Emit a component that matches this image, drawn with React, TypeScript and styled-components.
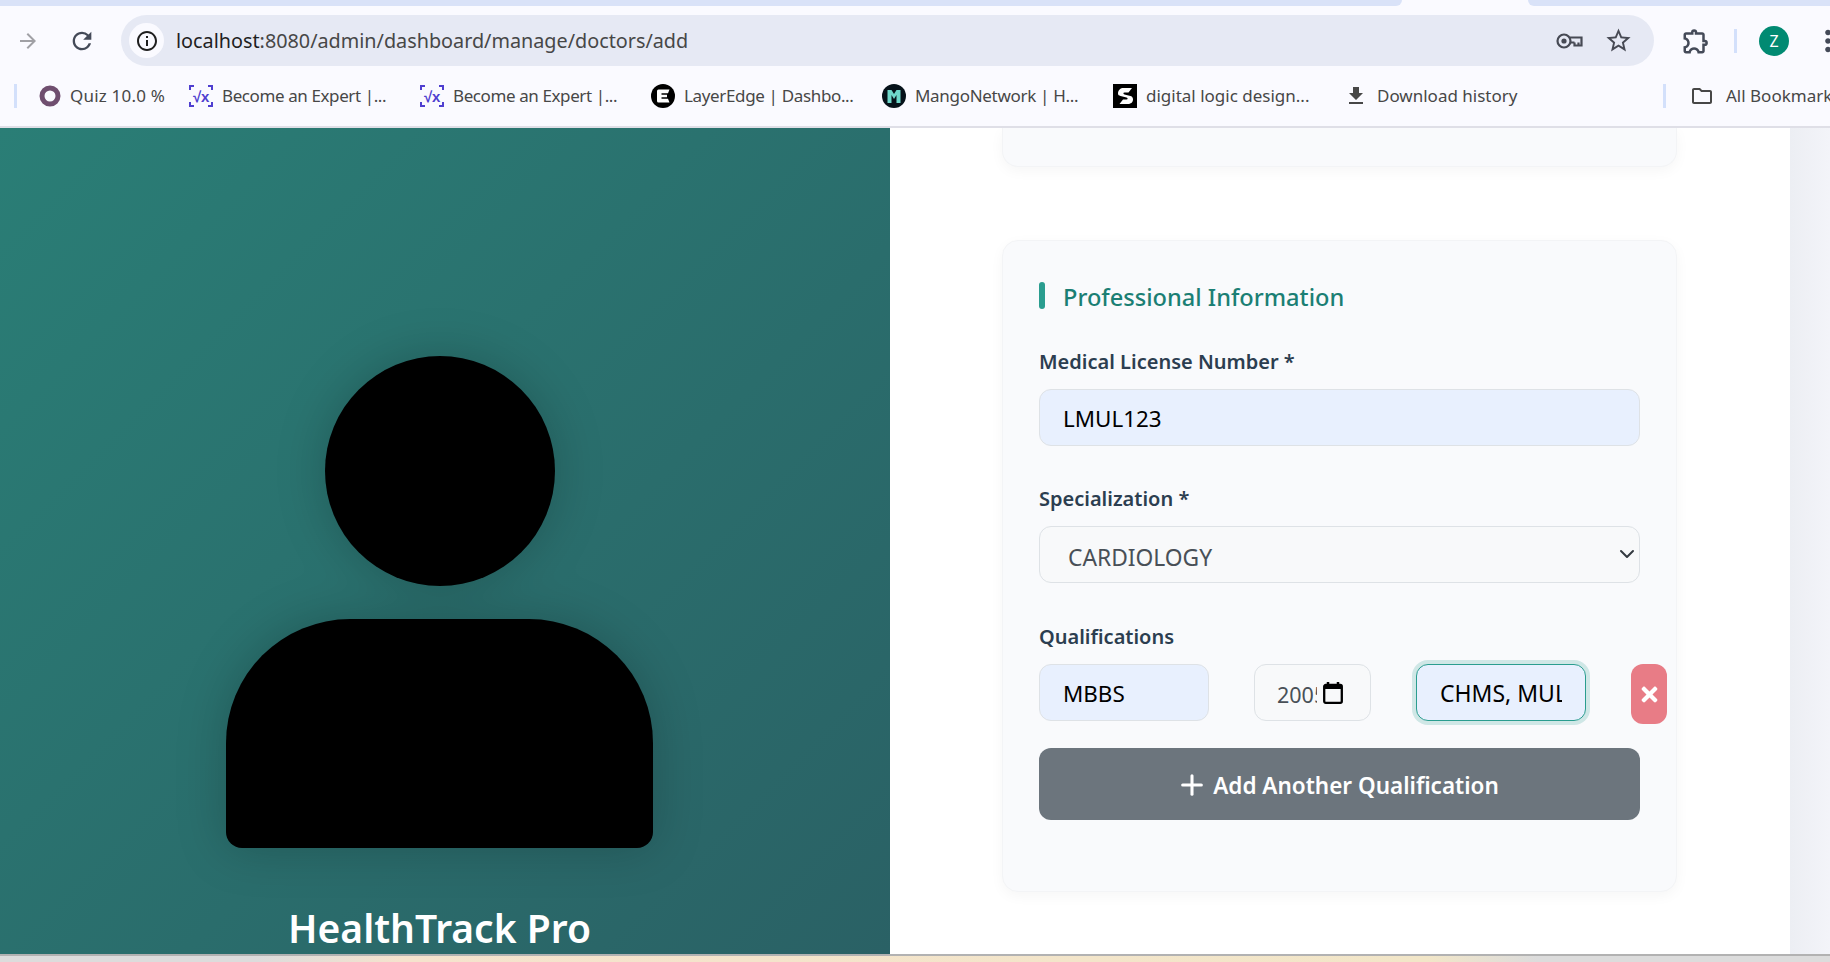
import React from "react"
import styled, { createGlobalStyle } from "styled-components"
import { MdArrowForward, MdRefresh, MdInfoOutline, MdStarBorder, MdOutlineExtension, MdFileDownload, MdOutlineFolder, MdMoreVert } from "react-icons/md"
import { FaTimes } from "react-icons/fa"
import { Plus, ChevronDown } from "lucide-react"

const GlobalStyle = createGlobalStyle`
  html, body {
    margin: 0;
    padding: 0;
    height: 100%;
    overflow: hidden;
    font-family: "Noto Sans", "Open Sans", sans-serif;
  }
  * { box-sizing: border-box; }
`

const Page = styled.div`
  width: 1830px;
  height: 962px;
  display: flex;
  flex-direction: column;
  overflow: hidden;
  background: #fafaff;
`

/* browser chrome */
const TabStrip = styled.div`
  height: 6px;
  display: flex;
  justify-content: space-between;
  flex-shrink: 0;
`

const TabStripPiece = styled.div<{ $w: number; $side: "left" | "right" }>`
  width: ${p => p.$w}px;
  height: 6px;
  background: #d9e2f8;
  border-bottom-${p => p.$side}-radius: 6px;
`

const Toolbar = styled.div`
  height: 60px;
  padding-top: 9px;
  display: flex;
  align-items: flex-start;
  flex-shrink: 0;
`

const NavButton = styled.div<{ $w: number; $color: string }>`
  width: ${p => p.$w}px;
  height: 51px;
  flex-shrink: 0;
  display: flex;
  align-items: center;
  justify-content: center;
  color: ${p => p.$color};
`

const AddressBar = styled.div`
  width: 1533px;
  height: 51px;
  margin-left: 13px;
  border-radius: 26px;
  background: #e6e9f4;
  display: flex;
  align-items: center;
  padding-left: 8px;
  padding-right: 21px;
  flex-shrink: 0;
`

const SiteInfo = styled.div`
  width: 35px;
  height: 35px;
  border-radius: 50%;
  background: #fafaff;
  display: flex;
  align-items: center;
  justify-content: center;
  color: #1f1f1f;
  flex-shrink: 0;
`

const Url = styled.div`
  margin-left: 12px;
  font-size: 19.8px;
  color: #474747;
  flex: 1;
  white-space: nowrap;
`

const UrlHost = styled.span`
  color: #1f1f1f;
`

const BarIcons = styled.div`
  display: flex;
  align-items: center;
  gap: 21px;
  color: #474a54;
`

const ToolbarRight = styled.div`
  display: flex;
  align-items: center;
  flex-shrink: 0;
  height: 51px;
  margin-left: 27px;
  color: #444a58;
  svg {
    flex-shrink: 0;
  }
`

const ExtensionSlot = styled.div`
  width: 53px;
  flex-shrink: 0;
  display: flex;
  align-items: center;
`

const VDivider = styled.div`
  width: 3px;
  height: 24px;
  background: #d3e0fb;
  flex-shrink: 0;
`

const Avatar = styled.div`
  width: 30px;
  height: 30px;
  border-radius: 50%;
  background: #018a72;
  color: #fff;
  font-size: 16px;
  flex-shrink: 0;
  display: flex;
  align-items: center;
  justify-content: center;
  margin-left: 22px;
`

const Kebab = styled.div`
  margin-left: 24px;
  width: 30px;
  flex-shrink: 0;
  display: flex;
  justify-content: center;
  color: #444a58;
`

const BookmarkBar = styled.div`
  height: 62px;
  padding: 18px 0 0 14px;
  display: flex;
  align-items: flex-start;
  border-bottom: 2px solid #dfdfe7;
  flex-shrink: 0;
  overflow: hidden;
`

const BookmarkStart = styled.div`
  width: 21px;
  flex-shrink: 0;
`

const BookmarkEnd = styled.div`
  width: 24px;
  flex-shrink: 0;
`

const Bookmark = styled.div<{ $w: number; $gap?: number; $spacing?: number }>`
  width: ${p => p.$w}px;
  height: 24px;
  display: flex;
  align-items: center;
  gap: ${p => p.$gap ?? 9}px;
  flex-shrink: 0;
  font-size: 17px;
  letter-spacing: ${p => p.$spacing ?? 0}px;
  color: #474747;
  white-space: nowrap;
`

const BookmarkIcon = styled.div`
  width: 24px;
  height: 24px;
  display: flex;
  align-items: center;
  justify-content: center;
  flex-shrink: 0;
  color: #474747;
`

const BookmarkLabel = styled.span`
  margin-top: -2px;
`

const Content = styled.div`
  height: 826px;
  display: flex;
  flex-shrink: 0;
  background: #fff;
`

/* left brand panel */
const BrandPanel = styled.div`
  width: 890px;
  flex-shrink: 0;
  padding: 228px 11px 0 0;
  display: flex;
  flex-direction: column;
  align-items: center;
  background: linear-gradient(135deg, #2a7e76 0%, #2a6165 100%);
  overflow: hidden;
`

const PersonIcon = styled.svg`
  display: block;
  flex-shrink: 0;
  filter: drop-shadow(0 0 24px rgba(0, 0, 0, 0.2));
`

const BrandTitle = styled.h1`
  margin: 52px 0 0;
  flex-shrink: 0;
  font-size: 39px;
  line-height: 56px;
  font-weight: 600;
  color: #fff;
  white-space: nowrap;
`

/* form side */
const FormPane = styled.div`
  flex: 1;
  padding: 0 113px 0 112px;
  overflow: hidden;
`

const Card = styled.section`
  background: #f9fafc;
  border-radius: 16px;
  border: 1px solid #f3f4f6;
  box-shadow: 0 4px 14px rgba(0, 0, 0, 0.04);
`

const ClippedCard = styled(Card)`
  height: 39px;
  border-top: none;
  border-top-left-radius: 0;
  border-top-right-radius: 0;
  margin-bottom: 73px;
`

const ProfessionalCard = styled(Card)`
  height: 652px;
  padding: 41px 36px 0;
`

const SectionTitle = styled.h2`
  margin: 0 0 40px;
  height: 27px;
  display: flex;
  align-items: center;
  gap: 18px;
  font-size: 23.6px;
  font-weight: 500;
  color: #1b7f74;
  &::before {
    content: "";
    width: 6px;
    height: 27px;
    border-radius: 3px;
    background: #2a9d8f;
  }
`

const SectionText = styled.span`
  margin-top: 2px;
`

const Group = styled.div<{ $mb?: number }>`
  margin-bottom: ${p => p.$mb ?? 40}px;
`

const Label = styled.label`
  display: block;
  height: 26px;
  line-height: 26px;
  margin-bottom: 14px;
  font-size: 20px;
  font-weight: 600;
  color: #2c3e50;
`

const TextInput = styled.input<{ $w?: number; $focused?: boolean }>`
  display: block;
  width: ${p => (p.$w ? `${p.$w}px` : "100%")};
  height: 57px;
  padding: 1px 23px 0;
  flex-shrink: 0;
  border-radius: 12px;
  border: 1px solid ${p => (p.$focused ? "#2a9d8f" : "#dee2e6")};
  box-shadow: ${p => (p.$focused ? "0 0 0 4px rgba(42, 157, 143, 0.2)" : "none")};
  background: #e8f0fe;
  font: inherit;
  font-size: ${p => (p.$focused ? 23 : 22.4)}px;
  color: #000;
  outline: none;
`

const SelectWrap = styled.div`
  position: relative;
  color: #343a40;
  svg {
    position: absolute;
    top: 16px;
    right: 1px;
    pointer-events: none;
  }
`

const SelectBox = styled.select`
  display: block;
  width: 100%;
  height: 57px;
  padding: 5px 24px 0 28px;
  border-radius: 12px;
  border: 1px solid #dee2e6;
  background: #f8f9fa;
  appearance: none;
  font: inherit;
  font-size: 22.8px;
  color: #495057;
  outline: none;
`

const QualificationRow = styled.div`
  display: flex;
  align-items: flex-start;
  gap: 45px;
  margin-bottom: 24px;
`

const DateField = styled.div`
  width: 117px;
  height: 57px;
  flex-shrink: 0;
  padding-left: 22px;
  display: flex;
  align-items: center;
  gap: 6px;
  border-radius: 12px;
  border: 1px solid #dee2e6;
  background: #f8f9fa;
  font-size: 21.5px;
  color: #495057;
`

const DateValue = styled.span`
  width: 40px;
  margin-top: 3px;
  overflow: hidden;
  white-space: nowrap;
`

const RemoveButton = styled.button`
  width: 36px;
  height: 60px;
  flex-shrink: 0;
  padding: 0;
  border: none;
  border-radius: 12px;
  background: #e87c86;
  color: #fff;
  display: flex;
  align-items: center;
  justify-content: center;
`

const AddButton = styled.button`
  width: 100%;
  height: 72px;
  padding: 2px 4px 0 0;
  border: none;
  border-radius: 12px;
  background: #6c757d;
  color: #fff;
  font: inherit;
  font-size: 22.5px;
  font-weight: 600;
  display: flex;
  align-items: center;
  justify-content: center;
  gap: 5px;
`

const Scrollbar = styled.div`
  width: 40px;
  flex-shrink: 0;
  background: linear-gradient(90deg, #eceef3, #f3f4f9);
`

const BottomEdge = styled.div`
  flex: 1;
  border-top: 2px solid #b2b2b2;
  background: linear-gradient(90deg, #dcdcdc 0%, #dcdcdc 14%, #f5e3cd 22%, #f2e6c8 78%, #dcdcdc 84%, #dcdcdc 100%);
`

const VxIcon = () => (
  <svg width="24" height="22" viewBox="0 0 24 22">
    <path d="M5 1H1v4M19 1h4v4M5 21H1v-4M19 21h4v-4" fill="none" stroke="#4f3fd0" strokeWidth="2" />
    <text x="12" y="16.500" textAnchor="middle" fontSize="15" fontWeight="700" fill="#4f3fd0" fontFamily="'Liberation Sans', sans-serif">√x</text>
  </svg>
)

const KeyIcon = () => (
  <svg width="27" height="16" viewBox="0 0 27 16">
    <circle cx="8" cy="8" r="6.500" fill="none" stroke="currentColor" strokeWidth="2.200" />
    <circle cx="8" cy="8" r="2.600" fill="currentColor" />
    <path d="M14 4.500h11.500v8h-3v-3M22.500 12.500h-4v-3M18.500 9.500H14" fill="none" stroke="currentColor" strokeWidth="2.200" />
  </svg>
)

const CalendarIcon = () => (
  <svg width="20" height="22" viewBox="0 0 20 22">
    <path d="M5 0v4M15 0v4" stroke="#000" strokeWidth="2.500" />
    <rect x="1.200" y="3" width="17.600" height="17.800" rx="1.500" fill="none" stroke="#000" strokeWidth="2.300" />
    <rect x="1.200" y="3" width="17.600" height="4" fill="#000" />
  </svg>
)

const App = () => {
  return (
    <Page>
      <GlobalStyle />
      <TabStrip>
        <TabStripPiece $w={1402} $side="right" />
        <TabStripPiece $w={302} $side="left" />
      </TabStrip>
      <Toolbar>
        <NavButton $w={55} $color="#a0a0a5"><MdArrowForward size={24} /></NavButton>
        <NavButton $w={53} $color="#444a58"><MdRefresh size={28} /></NavButton>
        <AddressBar>
          <SiteInfo><MdInfoOutline size={24} /></SiteInfo>
          <Url><UrlHost>localhost</UrlHost>:8080/admin/dashboard/manage/doctors/add</Url>
          <BarIcons>
            <KeyIcon />
            <MdStarBorder size={29} />
          </BarIcons>
        </AddressBar>
        <ToolbarRight>
          <ExtensionSlot><MdOutlineExtension size={30} /></ExtensionSlot>
          <VDivider />
          <Avatar>Z</Avatar>
          <Kebab><MdMoreVert size={34} /></Kebab>
        </ToolbarRight>
      </Toolbar>
      <BookmarkBar>
        <VDivider />
        <BookmarkStart />
        <Bookmark $w={151} $gap={8} $spacing={0.2}>
          <BookmarkIcon>
            <svg width="22" height="22" viewBox="0 0 22 22"><circle cx="11" cy="11" r="8" fill="none" stroke="#6f4e6f" strokeWidth="5" /></svg>
          </BookmarkIcon>
          <BookmarkLabel>Quiz 10.0 %</BookmarkLabel>
        </Bookmark>
        <Bookmark $w={231} $spacing={-0.4}><BookmarkIcon><VxIcon /></BookmarkIcon><BookmarkLabel>Become an Expert |...</BookmarkLabel></Bookmark>
        <Bookmark $w={231} $spacing={-0.4}><BookmarkIcon><VxIcon /></BookmarkIcon><BookmarkLabel>Become an Expert |...</BookmarkLabel></Bookmark>
        <Bookmark $w={231} $spacing={-0.35}>
          <BookmarkIcon>
            <svg width="24" height="24" viewBox="0 0 24 24">
              <circle cx="12" cy="12" r="12" fill="#000" />
              <path d="M7.500 5.500H18.500L17 9.200H10.500V10.800H16V13.200H10.500V14.800H17L18.500 18.500H7.500A1.500 1.500 0 0 1 6 17V7A1.500 1.500 0 0 1 7.500 5.500Z" fill="#fff" />
            </svg>
          </BookmarkIcon>
          <BookmarkLabel>LayerEdge | Dashbo...</BookmarkLabel>
        </Bookmark>
        <Bookmark $w={231} $spacing={-0.3}>
          <BookmarkIcon>
            <svg width="24" height="24" viewBox="0 0 24 24">
              <circle cx="12" cy="12" r="12" fill="#06121a" />
              <path d="M5.500 6h4l2.500 4 2.500-4h4v13h-4v-8l-2.500 4-2.500-4v8h-4z" fill="#6fd8cb" />
            </svg>
          </BookmarkIcon>
          <BookmarkLabel>MangoNetwork | H...</BookmarkLabel>
        </Bookmark>
        <Bookmark $w={231}>
          <BookmarkIcon>
            <svg width="24" height="24" viewBox="0 0 24 24">
              <rect width="24" height="24" fill="#000" />
              <path d="M5 9.500C5 6 7.500 4 10.500 4H19l-3.500 4.500h-4c-1.500 0-1.500 1.500 0 2l6 1.500c2 .5 2.500 2 2.500 3.500 0 3-2.500 4.500-5 4.500H6.500l3.500-4.500h3.500c1.500 0 1.500-1.500 0-2l-6-1.500C6 11.500 5 11 5 9.500z" fill="#fff" />
            </svg>
          </BookmarkIcon>
          <BookmarkLabel>digital logic design...</BookmarkLabel>
        </Bookmark>
        <Bookmark $w={319}><BookmarkIcon><MdFileDownload size={24} /></BookmarkIcon><BookmarkLabel>Download history</BookmarkLabel></Bookmark>
        <VDivider />
        <BookmarkEnd />
        <Bookmark $w={200} $gap={12}><BookmarkIcon><MdOutlineFolder size={28} /></BookmarkIcon><BookmarkLabel>All Bookmarks</BookmarkLabel></Bookmark>
      </BookmarkBar>
      <Content>
        <BrandPanel>
          <PersonIcon width="427" height="492" viewBox="0 0 427 492">
            <circle cx="214" cy="115" r="115" fill="#000" />
            <path d="M124 263H303A124 124 0 0 1 427 387V476A16 16 0 0 1 411 492H16A16 16 0 0 1 0 476V387A124 124 0 0 1 124 263Z" fill="#000" />
          </PersonIcon>
          <BrandTitle>HealthTrack Pro</BrandTitle>
        </BrandPanel>
        <FormPane>
          <ClippedCard />
          <ProfessionalCard>
            <SectionTitle><SectionText>Professional Information</SectionText></SectionTitle>
            <Group>
              <Label>Medical License Number *</Label>
              <TextInput readOnly value="LMUL123" />
            </Group>
            <Group $mb={41}>
              <Label>Specialization *</Label>
              <SelectWrap>
                <SelectBox defaultValue="CARDIOLOGY">
                  <option>CARDIOLOGY</option>
                </SelectBox>
                <ChevronDown size={24} strokeWidth={2} />
              </SelectWrap>
            </Group>
            <Label>Qualifications</Label>
            <QualificationRow>
              <TextInput readOnly $w={170} value="MBBS" />
              <DateField>
                <DateValue>2005</DateValue>
                <CalendarIcon />
              </DateField>
              <TextInput readOnly $w={170} $focused value="CHMS, MULTAN" />
              <RemoveButton><FaTimes size={23} /></RemoveButton>
            </QualificationRow>
            <AddButton><Plus size={32} strokeWidth={2.3} />Add Another Qualification</AddButton>
          </ProfessionalCard>
        </FormPane>
        <Scrollbar />
      </Content>
      <BottomEdge />
    </Page>
  )
}

export default App
